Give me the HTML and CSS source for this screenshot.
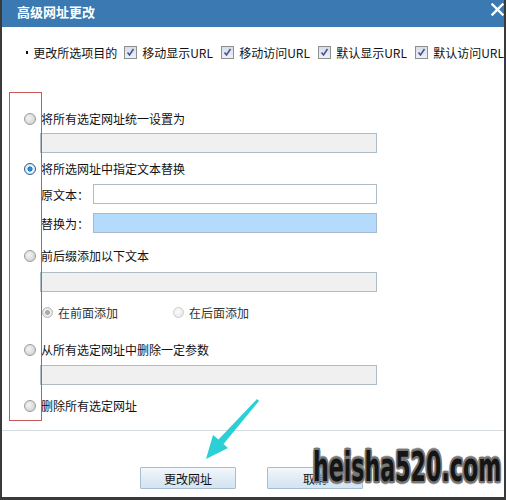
FILE: index.html
```html
<!DOCTYPE html>
<html lang="zh-CN">
<head>
  <meta charset="UTF-8" />
  <title>高级网址更改</title>
  <link rel="stylesheet" href="styles.css">
</head>
<body>
  <div class="page">
    <div class="dialog">
      <div class="titlebar">
        <span class="title">高级网址更改</span>
        <svg class="close" width="13" height="13" viewBox="0 0 13 13">
          <path d="M1.5 1.5 L11.5 11.5 M11.5 1.5 L1.5 11.5" stroke="#fff" stroke-width="2.4" stroke-linecap="square" />
        </svg>
      </div>

      <div class="targets">
        <span class="bullet"></span>
        <span class="targets-label">更改所选项目的</span>
        <label class="check-item"><span class="checkbox"><svg width="11" height="11" viewBox="0 0 11 11"><path d="M2.5 5.5 L4.5 8 L8.5 2" fill="none" stroke="#42579a" stroke-width="1.6" /></svg></span>移动显示URL</label>
        <label class="check-item"><span class="checkbox"><svg width="11" height="11" viewBox="0 0 11 11"><path d="M2.5 5.5 L4.5 8 L8.5 2" fill="none" stroke="#42579a" stroke-width="1.6" /></svg></span>移动访问URL</label>
        <label class="check-item"><span class="checkbox"><svg width="11" height="11" viewBox="0 0 11 11"><path d="M2.5 5.5 L4.5 8 L8.5 2" fill="none" stroke="#42579a" stroke-width="1.6" /></svg></span>默认显示URL</label>
        <label class="check-item last"><span class="checkbox"><svg width="11" height="11" viewBox="0 0 11 11"><path d="M2.5 5.5 L4.5 8 L8.5 2" fill="none" stroke="#42579a" stroke-width="1.6" /></svg></span>默认访问URL</label>
      </div>

      <div class="options">
        <div class="option first"><span class="radio"></span>将所有选定网址统一设置为</div>
        <div class="field disabled"></div>

        <div class="option second"><span class="radio checked"></span>将所选网址中指定文本替换</div>
        <div class="pair original"><span class="pair-label">原文本：</span><div class="field short"></div></div>
        <div class="pair replace"><span class="pair-label">替换为：</span><div class="field short focused"></div></div>

        <div class="option third"><span class="radio"></span>前后缀添加以下文本</div>
        <div class="field disabled"></div>
        <div class="sub-options">
          <span class="sub"><span class="radio small dim-checked"></span>在前面添加</span>
          <span class="sub"><span class="radio small dim"></span>在后面添加</span>
        </div>

        <div class="option fourth"><span class="radio"></span>从所有选定网址中删除一定参数</div>
        <div class="field disabled"></div>

        <div class="option fifth"><span class="radio"></span>删除所有选定网址</div>
      </div>

      <div class="footer">
        <button class="btn">更改网址</button>
        <button class="btn">取消</button>
      </div>
    </div>

    <div class="mark-box"></div>
    <svg class="arrow" width="506" height="500" viewBox="0 0 506 500">
      <polygon points="206,459 228,448 223.5,444 259,401 257,399 218.5,439.5 213,435" fill="#2bd0d4" />
    </svg>
    <div class="watermark">heisha520.com</div>
  </div>
</body>
</html>
```

FILE: styles.css
```css
html, body {
  margin: 0;
  padding: 0;
  background: #fff;
  overflow: hidden;
}

.page {
  position: relative;
  width: 506px;
  height: 500px;
  font-family: "Noto Sans CJK SC", "Liberation Sans", sans-serif;
  font-size: 12px;
  color: #111;
}

.dialog {
  box-sizing: border-box;
  width: 506px;
  height: 500px;
  background: #fff;
  border-left: 2px solid #3a3a3a;
  border-right: 2px solid #3a3a3a;
  border-bottom: 3px solid #3a3a3a;
  display: flex;
  flex-direction: column;
}

.titlebar {
  height: 27px;
  background: #3a79b2;
  display: flex;
  align-items: flex-start;
  justify-content: space-between;
  flex-shrink: 0;
}

.title {
  color: #fff;
  font-weight: bold;
  font-size: 13px;
  line-height: 24px;
  padding-left: 15px;
}

.close {
  margin-top: 3px;
}

/* target checkboxes */
.targets {
  display: flex;
  align-items: center;
  height: 16px;
  margin-top: 17px;
  padding-left: 24px;
  white-space: nowrap;
}

.bullet {
  width: 3px;
  height: 3px;
  margin-right: 5px;
  margin-top: 1px;
  background: #111;
}

.targets-label {
  margin-right: 7px;
}

.check-item {
  display: flex;
  align-items: center;
  width: 97px;
  flex-shrink: 0;
}

.check-item.last {
  width: auto;
}

.checkbox {
  box-sizing: border-box;
  width: 13px;
  height: 13px;
  margin-right: 5px;
  border: 1px solid #8e8f8f;
  background: linear-gradient(#d9dee6, #eef1f5);
  display: flex;
  align-items: center;
  justify-content: center;
}

/* options */
.options {
  padding-left: 22px;
}

.option {
  display: flex;
  align-items: center;
  height: 16px;
  line-height: 16px;
}

.option.first { margin-top: 51px; }
.option.second { margin-top: 8px; }
.option.third { margin-top: 15px; }
.option.fourth { margin-top: 22px; }
.option.fifth { margin-top: 13px; }

.radio {
  box-sizing: border-box;
  width: 12px;
  height: 12px;
  margin-right: 5px;
  border-radius: 50%;
  border: 1px solid #9a9a9a;
  background: radial-gradient(circle at 40% 40%, #f4f4f4 0, #d6d6d6 70%, #c4c4c4 100%);
  flex-shrink: 0;
}

.radio.checked {
  border-color: #2b5c85;
  background: radial-gradient(circle, #2f9be8 0, #1679c4 32%, #e8f2fa 40%, #cfe2f0 100%);
}

.radio.small {
  width: 11px;
  height: 11px;
}

.radio.dim-checked {
  border-color: #b4b4b4;
  background: radial-gradient(circle, #b0b0b0 0, #a4a4a4 32%, #efefef 42%, #e2e2e2 100%);
}

.radio.dim {
  border-color: #cdcdcd;
  background: radial-gradient(circle at 40% 40%, #fafafa 0, #e6e6e6 100%);
}

.field {
  box-sizing: border-box;
  width: 337px;
  height: 20px;
  margin-left: 16px;
  border: 1px solid #aebcc6;
  background: #fff;
}

.field.disabled {
  margin-top: 6px;
  background: #f0f0f0;
}

.option.fourth + .field {
  margin-top: 7px;
}

.option.third + .field {
  margin-top: 8px;
}

.field.short {
  width: 284px;
  margin-left: 0;
}

.field.focused {
  background: #b4dbfc;
  border-color: #a6bccc;
}

.pair {
  display: flex;
  align-items: center;
  margin-left: 17px;
}

.pair.original { margin-top: 7px; }
.pair.replace { margin-top: 9px; }

.pair-label {
  width: 52px;
}

.sub-options {
  display: flex;
  align-items: center;
  height: 16px;
  margin-top: 12px;
  padding-left: 18px;
  color: #333;
}

.sub {
  display: flex;
  align-items: center;
  width: 131px;
}

/* footer */
.footer {
  margin-top: 16px;
  border-top: 1px solid #d5dde3;
  padding-top: 36px;
  padding-left: 138px;
  display: flex;
  gap: 31px;
}

.btn {
  width: 96px;
  height: 22px;
  padding: 0;
  border: 1px solid #a7bdd0;
  border-radius: 1px;
  background: linear-gradient(#f3f8fc, #dfebf5 55%, #d3e4f1);
  font-family: "Noto Sans CJK SC", "Liberation Sans", sans-serif;
  font-size: 12px;
  color: #111;
}

/* overlays */
.mark-box {
  position: absolute;
  left: 9px;
  top: 92px;
  width: 31px;
  height: 327px;
  border: 1px solid #c65b5b;
}

.arrow {
  position: absolute;
  left: 0;
  top: 0;
  pointer-events: none;
}

.watermark {
  position: absolute;
  left: 313px;
  top: 447px;
  font-family: "DejaVu Sans Condensed", "DejaVu Sans", sans-serif;
  font-weight: bold;
  font-size: 41px;
  line-height: 40px;
  color: #151515;
  transform: scaleX(0.6);
  transform-origin: left top;
  white-space: nowrap;
  text-shadow:
    2px 0 0 #777, -2px 0 0 #777, 0 2px 0 #777, 0 -2px 0 #777,
    2px 2px 0 #777, -2px -2px 0 #777, 2px -2px 0 #777, -2px 2px 0 #777,
    3px 0 1px #bbb, -3px 0 1px #bbb, 0 3px 1px #bbb, 0 -3px 1px #bbb;
}
```
